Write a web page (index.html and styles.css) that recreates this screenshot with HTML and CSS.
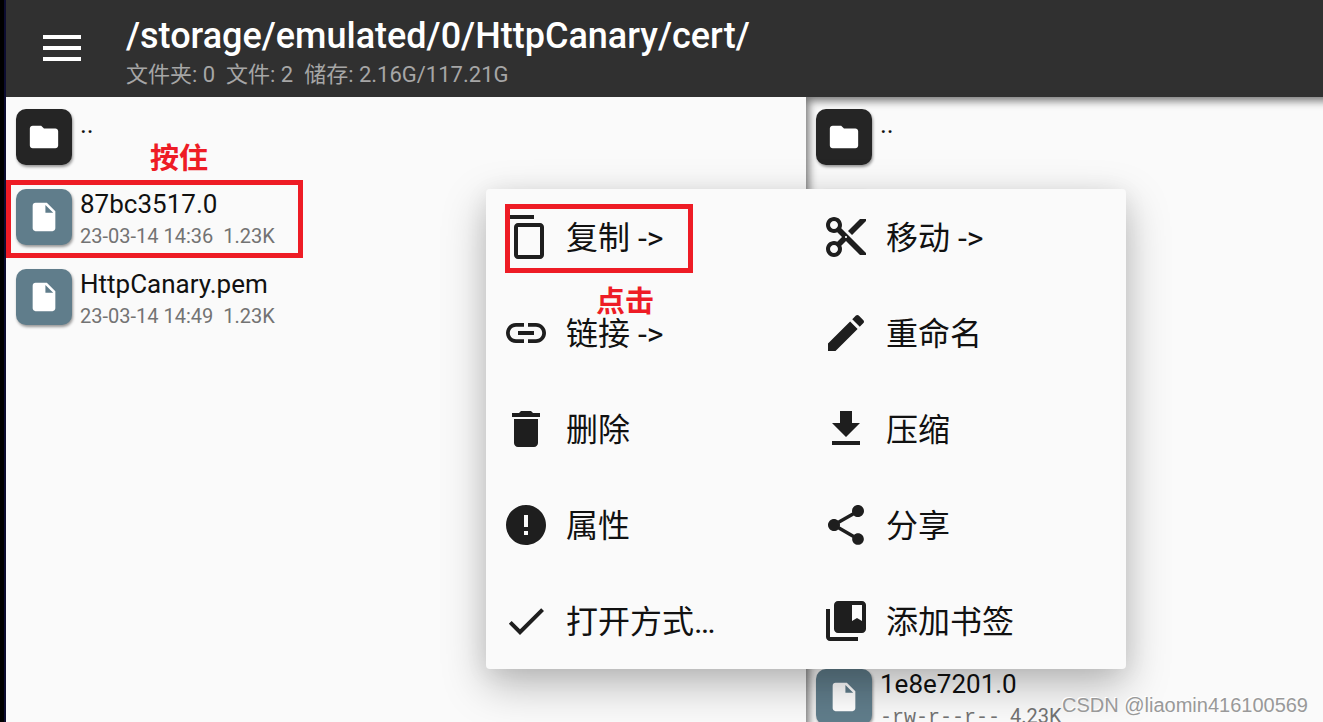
FILE: index.html
```html
<!DOCTYPE html>
<html lang="zh-CN">
<head>
<meta charset="utf-8">
<title>/storage/emulated/0/HttpCanary/cert/</title>
<link rel="stylesheet" href="styles.css">
</head>
<body>
<svg class="defs" aria-hidden="true">
  <symbol id="folder" viewBox="0 0 24 24"><path d="M10 4H4c-1.100 0-2 .9-2 2v12c0 1.100.9 2 2 2h16c1.100 0 2-.9 2-2V8c0-1.100-.9-2-2-2h-8l-2-2z"/></symbol>
  <symbol id="file" viewBox="0 0 24 24"><path d="M6 2c-1.100 0-2 .9-2 2v16c0 1.100.9 2 2 2h12c1.100 0 2-.9 2-2V8l-6-6H6zm7 7V3.500L18.500 9H13z"/></symbol>
</svg>
<div class="app">
  <header class="bar">
    <button class="menu-button" type="button" aria-label="菜单">
      <svg viewBox="0 0 38 26"><path d="M0 0h38v4H0zM0 11h38v4H0zM0 22h38v4H0z"/></svg>
    </button>
    <div class="heading">
      <h1 class="path">/storage/emulated/0/HttpCanary/cert/</h1>
      <p class="stats">文件夹: 0&nbsp; 文件: 2&nbsp; 储存: 2.16G/117.21G</p>
    </div>
  </header>
  <main class="panes">
    <ul class="pane pane-left">
      <li class="row"><span class="tile tile-folder"><svg><use href="#folder"/></svg></span><div class="label"><span class="name">..</span></div></li>
      <li class="row"><span class="tile"><svg><use href="#file"/></svg></span><div class="label"><span class="name">87bc3517.0</span><span class="meta">23-03-14 14:36&nbsp; 1.23K</span></div></li>
      <li class="row"><span class="tile"><svg><use href="#file"/></svg></span><div class="label"><span class="name">HttpCanary.pem</span><span class="meta">23-03-14 14:49&nbsp; 1.23K</span></div></li>
    </ul>
    <ul class="pane pane-right">
      <li class="row"><span class="tile tile-folder"><svg><use href="#folder"/></svg></span><div class="label"><span class="name">..</span></div></li>
      <li class="row"><span class="tile"></span></li>
      <li class="row row-last"><span class="tile"><svg><use href="#file"/></svg></span><div class="label"><span class="name">1e8e7201.0</span><span class="meta"><span class="mode">-rw-r--r--</span>&nbsp; 4.23K</span></div></li>
    </ul>
  </main>
  <div class="popup">
    <button type="button"><svg viewBox="0 0 24 24"><path d="M16 1H4c-1.100 0-2 .9-2 2v14h2V3h12V1zm3 4H8c-1.100 0-2 .9-2 2v14c0 1.100.9 2 2 2h11c1.100 0 2-.9 2-2V7c0-1.100-.9-2-2-2zm0 16H8V7h11v14z"/></svg><span>复制 -&gt;</span></button>
    <button type="button"><svg viewBox="0 0 24 24"><path d="M9.640 7.640c.23-.5.360-1.050.360-1.640 0-2.210-1.790-4-4-4S2 3.790 2 6s1.790 4 4 4c.59 0 1.140-.13 1.640-.36L10 12l-2.360 2.360C7.140 14.130 6.590 14 6 14c-2.210 0-4 1.790-4 4s1.790 4 4 4 4-1.790 4-4c0-.59-.13-1.140-.36-1.640L12 14l7 7h3v-1L9.640 7.640zM6 8c-1.100 0-2-.89-2-2s.9-2 2-2 2 .89 2 2-.9 2-2 2zm0 12c-1.100 0-2-.89-2-2s.9-2 2-2 2 .89 2 2-.9 2-2 2zm6-7.500c-.28 0-.5-.22-.5-.5s.22-.5.5-.5.5.22.5.5-.22.5-.5.5zM19 3l-6 6 2 2 7-7V3z"/></svg><span>移动 -&gt;</span></button>
    <button type="button"><svg viewBox="0 0 24 24"><path d="M3.900 12c0-1.710 1.390-3.100 3.100-3.100h4V7H7c-2.760 0-5 2.240-5 5s2.240 5 5 5h4v-1.900H7c-1.710 0-3.100-1.390-3.100-3.100zM8 13h8v-2H8v2zm9-6h-4v1.900h4c1.710 0 3.100 1.390 3.100 3.100s-1.390 3.100-3.100 3.100h-4V17h4c2.760 0 5-2.240 5-5s-2.240-5-5-5z"/></svg><span>链接 -&gt;</span></button>
    <button type="button"><svg viewBox="0 0 24 24"><path d="M3 17.250V21h3.750L17.810 9.940l-3.750-3.750L3 17.250zM20.710 7.040c.39-.39.39-1.020 0-1.410l-2.340-2.340c-.39-.39-1.020-.39-1.410 0l-1.830 1.830 3.750 3.750 1.830-1.830z"/></svg><span>重命名</span></button>
    <button type="button"><svg viewBox="0 0 24 24"><path d="M6 19c0 1.100.9 2 2 2h8c1.100 0 2-.9 2-2V7H6v12zM19 4h-3.500l-1-1h-5l-1 1H5v2h14V4z"/></svg><span>删除</span></button>
    <button type="button"><svg viewBox="0 0 24 24"><path d="M19 9h-4V3H9v6H5l7 7 7-7zM5 18v2h14v-2H5z"/></svg><span>压缩</span></button>
    <button type="button"><svg viewBox="0 0 24 24"><path d="M12 2C6.480 2 2 6.480 2 12s4.480 10 10 10 10-4.480 10-10S17.520 2 12 2zm1 15h-2v-2h2v2zm0-4h-2V7h2v6z"/></svg><span>属性</span></button>
    <button type="button"><svg viewBox="0 0 24 24"><path d="M18 16.080c-.76 0-1.440.3-1.960.77L8.910 12.700c.05-.23.09-.46.09-.7s-.04-.47-.09-.7l7.050-4.110c.54.5 1.250.81 2.040.81 1.660 0 3-1.340 3-3s-1.340-3-3-3-3 1.340-3 3c0 .24.04.47.09.7L8.040 9.810C7.500 9.310 6.790 9 6 9c-1.660 0-3 1.340-3 3s1.340 3 3 3c.79 0 1.500-.31 2.040-.81l7.120 4.160c-.05.21-.08.43-.08.65 0 1.610 1.310 2.920 2.920 2.920s2.920-1.310 2.920-2.920-1.310-2.920-2.920-2.920z"/></svg><span>分享</span></button>
    <button type="button"><svg viewBox="0 0 24 24"><path d="M9 16.170L4.830 12l-1.420 1.410L9 19 21 7l-1.410-1.410z"/></svg><span>打开方式…</span></button>
    <button type="button"><svg viewBox="0 0 24 24"><path d="M4 6H2v14c0 1.100.9 2 2 2h14v-2H4V6zM20 2H8c-1.100 0-2 .9-2 2v12c0 1.100.9 2 2 2h12c1.100 0 2-.9 2-2V4c0-1.100-.9-2-2-2zm0 10l-2.500-1.500L15 12V4h5v8z"/></svg><span>添加书签</span></button>
  </div>
  <div class="mark mark-file"></div>
  <span class="note note-hold">按住</span>
  <div class="mark mark-copy"></div>
  <span class="note note-click">点击</span>
  <span class="watermark">CSDN @liaomin416100569</span>
</div>
</body>
</html>
```
FILE: styles.css
```css
* { box-sizing: border-box; }

body {
  margin: 0;
  background: #fafafa;
  color: #111;
  font-family: Roboto, "Noto Sans CJK SC", sans-serif;
}

.defs { position: absolute; width: 0; height: 0; }

.app {
  position: relative;
  display: flex;
  flex-direction: column;
  height: 100vh;
  overflow: hidden;
  border-left: 4px solid #000;
}

.app::before {
  content: "";
  position: absolute;
  inset: 0 auto 0 0;
  width: 2px;
  background: #0c0c30;
}

.bar {
  display: flex;
  flex: none;
  align-items: center;
  gap: 45px;
  height: 97px;
  margin-left: 2px;
  padding-left: 37px;
  background: #303030;
}

.menu-button {
  padding: 0 0 2px;
  border: 0;
  background: none;
}

.menu-button svg {
  display: block;
  width: 38px;
  height: 26px;
  fill: #fff;
}

.heading { padding-top: 8px; }

.path {
  margin: 0 0 2px;
  color: #fff;
  font-size: 36px;
  font-weight: 500;
  line-height: 42px;
}

.stats {
  margin: 0;
  color: #a6a6a6;
  font-size: 22px;
  line-height: 32px;
}

.panes {
  display: flex;
  flex: 1;
  min-height: 0;
  margin-left: 2px;
}

.pane {
  display: grid;
  grid-auto-rows: 80px;
  align-content: start;
  margin: 0;
  padding: 0;
  list-style: none;
}

.pane-left { flex: 0 0 800px; }

.pane-right {
  flex: 1;
  overflow: hidden;
  box-shadow: inset 7px 8px 8px -4px #777;
}

.row-last { grid-row: 8; }

.row {
  display: flex;
  gap: 8px;
  padding: 12px 10px;
}

.tile {
  display: grid;
  flex: none;
  place-items: center;
  width: 56px;
  height: 56px;
  border-radius: 10px;
  background: #607d8b;
  box-shadow: 1px 2px 3px #0006;
}

.tile-folder { background: #252525; }

.tile svg {
  width: 34px;
  height: 34px;
  fill: #fff;
}

.label {
  display: flex;
  flex-direction: column;
}

.name {
  font-size: 26px;
  line-height: 30px;
}

.meta {
  color: #737373;
  font-size: 20px;
  line-height: 34px;
  white-space: nowrap;
}

.mode { font-family: "Liberation Mono", monospace; }

.popup {
  position: absolute;
  top: 189px;
  left: 482px;
  display: grid;
  grid-template-columns: 1fr 1fr;
  grid-auto-rows: 96px;
  width: 640px;
  border-radius: 4px;
  background: #fafafa;
  box-shadow: 0 16px 44px #0004, 0 4px 24px #0001;
}

.popup button {
  display: flex;
  align-items: center;
  gap: 16px;
  padding: 0 16px;
  border: 0;
  background: none;
  color: #111;
  font: inherit;
  font-size: 32px;
}

.popup span { padding-bottom: 4px; }

.popup svg {
  width: 48px;
  height: 48px;
  fill: #1e1e1e;
}

.mark {
  position: absolute;
  border: 5px solid #ee1c25;
}

.mark-file { top: 180px; left: 2px; width: 297px; height: 78px; }

.mark-copy { top: 204px; left: 501px; width: 188px; height: 69px; }

.note {
  position: absolute;
  color: #ee1c25;
  font-family: "Noto Sans CJK SC", sans-serif;
  font-size: 29px;
  font-weight: 700;
  line-height: 32px;
}

.note-hold { top: 140px; left: 146px; }

.note-click { top: 283px; left: 592px; }

.watermark {
  position: absolute;
  right: 15px;
  bottom: 5px;
  color: #999;
  font-family: "Liberation Sans", sans-serif;
  font-size: 20px;
  line-height: 24px;
  text-shadow: -1px -1px 0 #fff;
}
```
